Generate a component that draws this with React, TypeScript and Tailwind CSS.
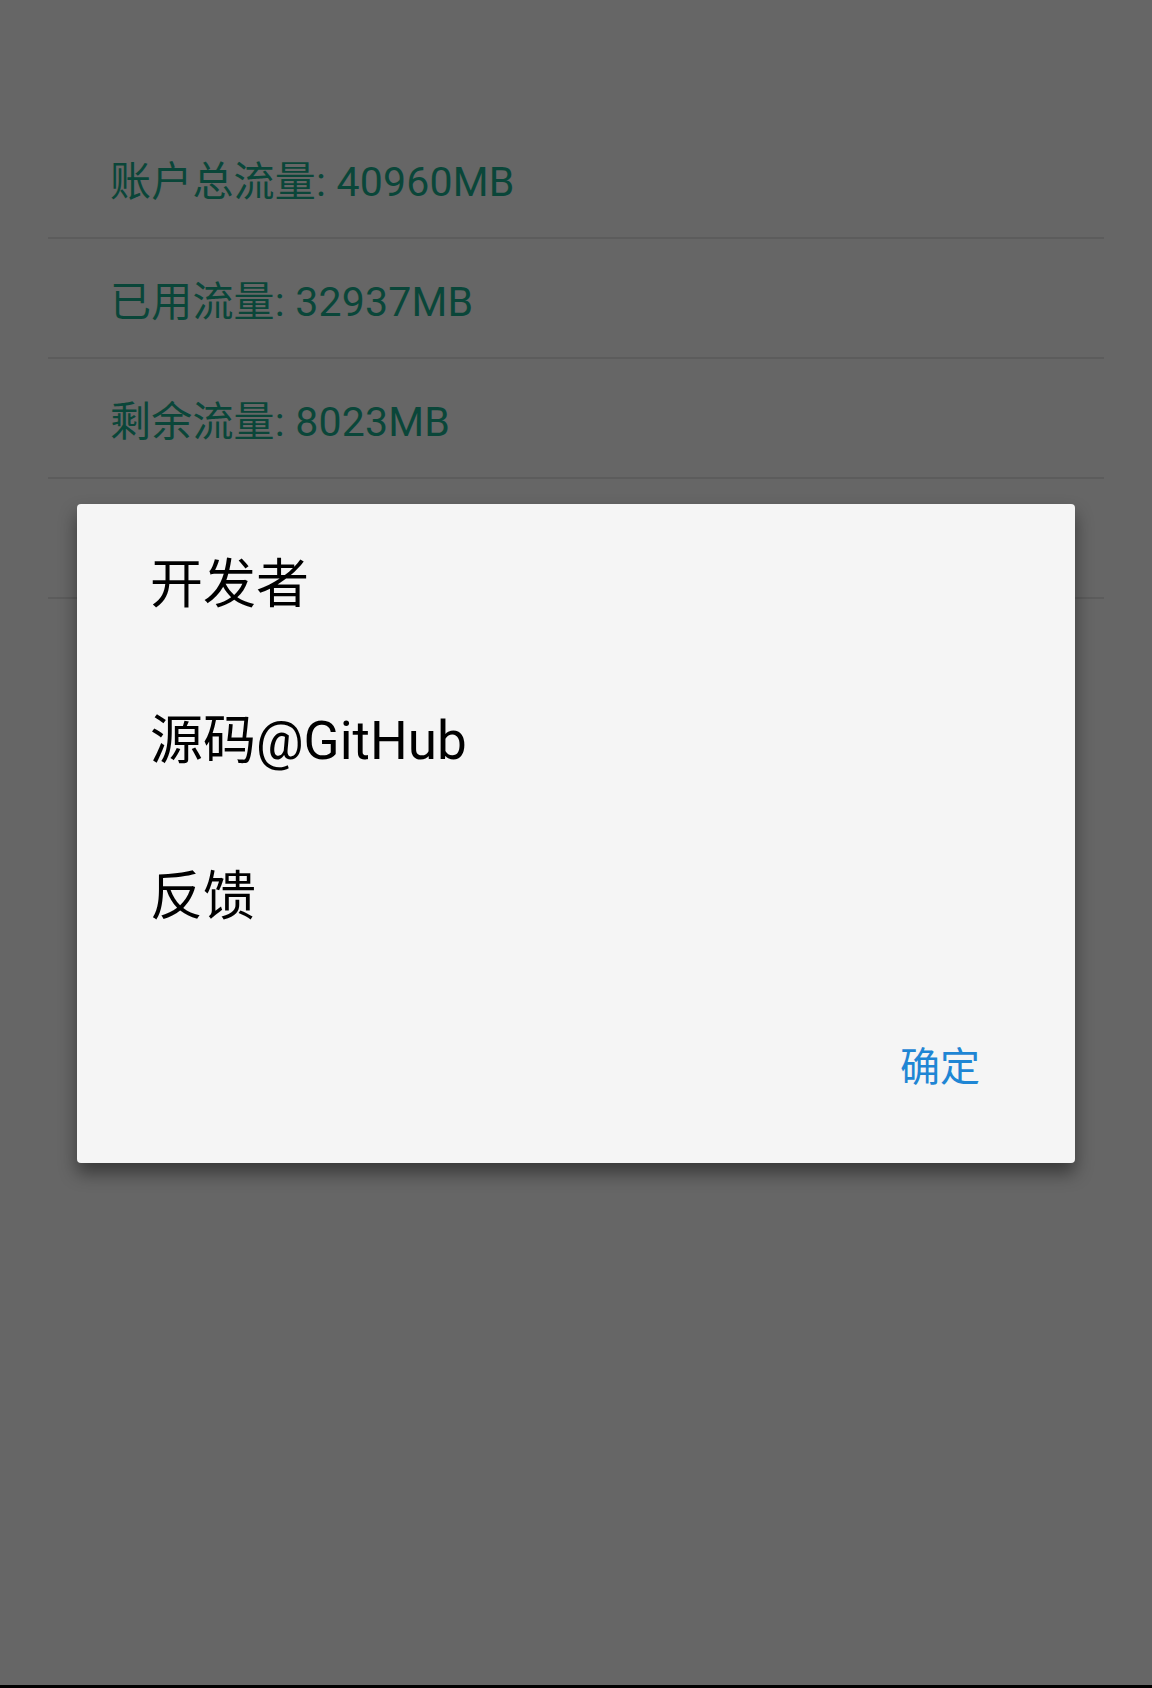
import React from 'react';

const rows = ['账户总流量: 40960MB', '已用流量: 32937MB', '剩余流量: 8023MB', ''];
const items = ['开发者', '源码@GitHub', '反馈'];

const App: React.FC = () => {
  return (
    <div
      className="relative flex h-[1688px] w-[1152px] flex-col bg-[#666666]"
      style={{ fontFamily: 'Roboto, "Noto Sans CJK SC", sans-serif' }}
    >
      {/* dimmed list behind the dialog */}
      <div className="flex-1 px-[48px] pt-[119px]">
        {rows.map((text, i) => (
          <div
            key={i}
            className="flex h-[120px] items-center border-b-2 border-[#5c5c5c] pl-[62px] pt-[8px] text-[41px] leading-none tracking-[0.2px] text-[#0a4639]"
          >
            {text}
          </div>
        ))}
      </div>
      <div className="h-[3px] bg-black" />

      {/* dialog */}
      <div className="absolute left-[77px] top-[504px] flex h-[659px] w-[998px] flex-col rounded-[4px] bg-[#f5f5f5] shadow-[0_10px_18px_rgba(0,0,0,0.45)]">
        {items.map((item) => (
          <div key={item} className="flex h-[156px] items-center pl-[73px] pt-[6px] text-[53px] leading-none text-black">
            {item}
          </div>
        ))}
        <div className="flex flex-1 items-center justify-end pr-[95px]">
          <span className="text-[40px] leading-none text-[#1f86d4]">确定</span>
        </div>
      </div>
    </div>
  );
};

export default App;
